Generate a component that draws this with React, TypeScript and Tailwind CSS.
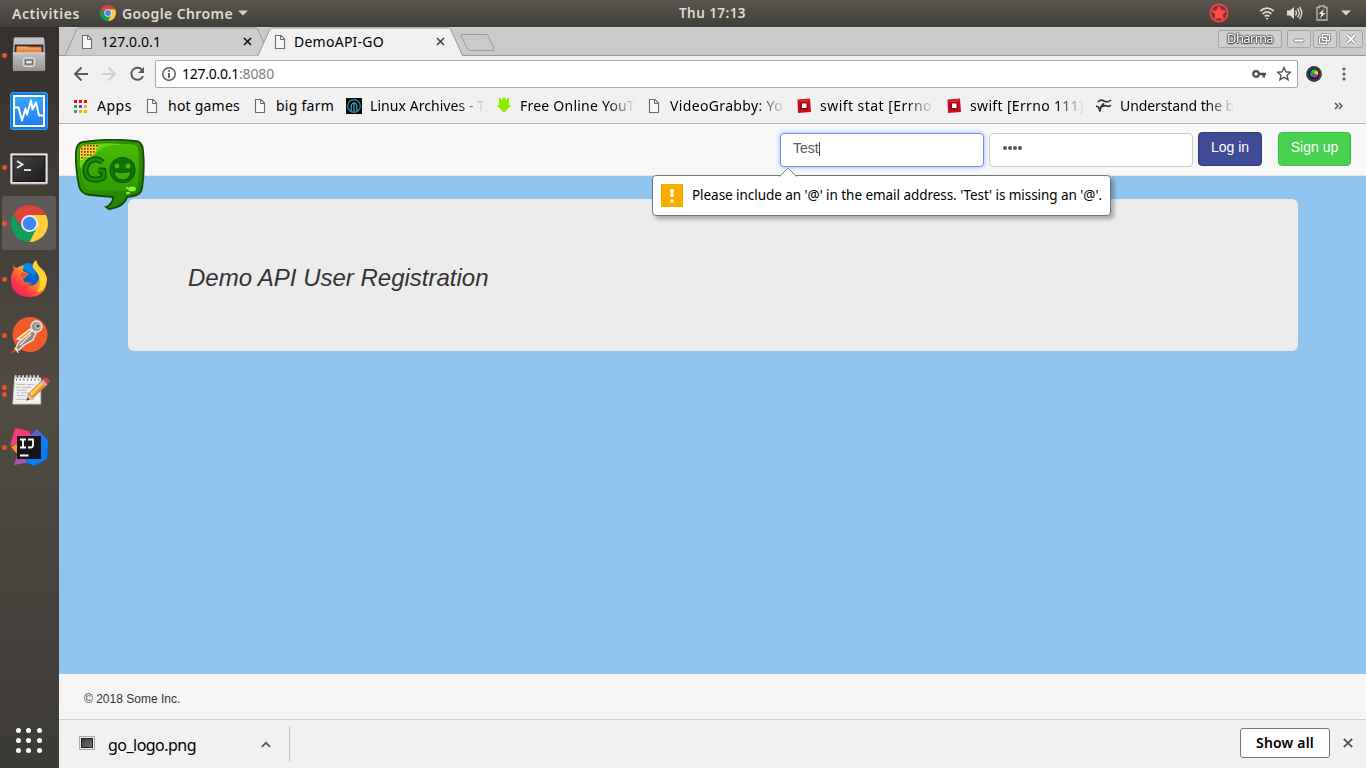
import { useLayoutEffect, useRef, useState } from 'react';
import type { ReactNode } from 'react';

const UI = "font-['Noto_Sans','Open_Sans',sans-serif]";

/* Single line label whose tracking is computed so that it fills a given width. */
function Label({ text, width, className = '' }: { text: string; width: number; className?: string }) {
  const ref = useRef<HTMLSpanElement>(null);
  const [spacing, setSpacing] = useState(0);
  useLayoutEffect(() => {
    if (ref.current) {
      setSpacing((width - ref.current.getBoundingClientRect().width) / text.length);
    }
  }, [text, width]);
  return (
    <span ref={ref} className={`${UI} inline-block shrink-0 whitespace-pre ${className}`} style={{ letterSpacing: spacing }}>
      {text}
    </span>
  );
}

function PageIcon({ className = '' }: { className?: string }) {
  return (
    <svg width="12" height="16" viewBox="0 0 12 16" className={`shrink-0 ${className}`}>
      <path d="M1.500 1.500h5.500l3.500 3.500v9.500h-9z" fill="#f8f8f8" stroke="#6c6c6c" strokeWidth="1.100" />
      <path d="M6.500 1.500v4h4" fill="none" stroke="#6c6c6c" strokeWidth="1" />
    </svg>
  );
}

function ChromeIcon({ size }: { size: number }) {
  return (
    <svg width={size} height={size} viewBox="0 0 48 48" className="shrink-0">
      <path d="M24 24H24L13.600 30L3.200 12A24 24 0 0 0 24 48L34.400 30z" fill="#109d58" />
      <path d="M24 13H45.300A24 24 0 0 1 24 48L33.500 29.500z" fill="#ffcd40" />
      <path d="M3.200 12A24 24 0 0 1 45.300 13H24L14 29z" fill="#db4437" />
      <circle cx="24" cy="24" r="11" fill="#f1f1f1" />
      <circle cx="24" cy="24" r="8.800" fill="#4285f4" />
    </svg>
  );
}

function FilesIcon() {
  return (
    <svg width="36" height="38" viewBox="0 0 38 40">
      <defs>
        <linearGradient id="cab" x1="0" y1="0" x2="0" y2="1"><stop offset="0" stopColor="#c4c4c4" /><stop offset="1" stopColor="#929292" /></linearGradient>
      </defs>
      <path d="M3 3q0-1.500 2-1.500h28q2 0 2 1.500l1 10v22q0 2-2 2H4q-2 0-2-2V13z" fill="#a0a0a0" />
      <path d="M3 3q0-1.500 2-1.500h28q2 0 2 1.500v6H3z" fill="#c3c3c3" />
      <path d="M4 9h30v8H4z" fill="#322c29" />
      <path d="M6 11h26v6H6z" fill="#c7672b" />
      <path d="M6 11h11l2 1h13v5H6z" fill="#eba45d" />
      <path d="M6 14h26v4H6z" fill="#ed8547" />
      <path d="M2 17.500h34V35q0 2-2 2H4q-2 0-2-2z" fill="url(#cab)" />
      <path d="M2 18h34" stroke="#dadada" />
      <rect x="13" y="23" width="12" height="9" rx="2" fill="#aaa" stroke="#eee" />
      <rect x="15.500" y="25.500" width="7" height="4" fill="#e7e7e7" stroke="#555" />
    </svg>
  );
}

function MonitorIcon() {
  return (
    <svg width="38" height="38" viewBox="0 0 38 38">
      <defs><linearGradient id="mon" x1="0" y1="0" x2="0" y2="1"><stop offset="0" stopColor="#38a8fa" /><stop offset="1" stopColor="#217df1" /></linearGradient></defs>
      <rect x=".5" y=".5" width="37" height="37" rx="2.500" fill="#1777e5" stroke="#25a0f5" />
      <rect x="4" y="4" width="30" height="30" fill="url(#mon)" stroke="#fff" strokeWidth="2" />
      <path d="M4 15.500h4.500l3.500 13 3.500-12 1.500 6 4-14 1.500 9 3.500-7 3 13h5" fill="none" stroke="#fff" strokeWidth="2" strokeLinejoin="round" />
    </svg>
  );
}

function TerminalIcon() {
  return (
    <svg width="38" height="32" viewBox="0 0 38 32" className="mt-[3px]">
      <defs><linearGradient id="term" x1="0" y1="0" x2="1" y2="1"><stop offset="0" stopColor="#454545" /><stop offset="1" stopColor="#1b1b1b" /></linearGradient></defs>
      <rect x=".5" y=".5" width="37" height="30.500" rx="1" fill="#e5e5e5" stroke="#a7a7a7" />
      <rect x="3" y="3" width="32" height="25.500" fill="url(#term)" stroke="#111" />
      <path d="M7 8l5.500 3.500L7 15" fill="none" stroke="#eee" strokeWidth="1.800" />
      <path d="M14 17h7" stroke="#eee" strokeWidth="1.800" />
    </svg>
  );
}

function FirefoxIcon() {
  return (
    <svg width="38" height="40" viewBox="0 0 38 40">
      <defs>
        <linearGradient id="fox" x1="1" y1="0" x2="0" y2="1"><stop offset="0" stopColor="#ffe226" /><stop offset=".4" stopColor="#ff9a1e" /><stop offset=".7" stopColor="#ff3647" /><stop offset="1" stopColor="#e31587" /></linearGradient>
      </defs>
      <circle cx="19" cy="19" r="15" fill="#0863cf" />
      <path d="M11 7q8-6 16 1l-2 9-10-6z" fill="#0787e6" />
      <path d="M3 6q1 3 4 3 3-3 8-2-3 2-2 5l6 3-6 5q1 5 7 3-1 3-5 3 7 3 12-2 4-5 1-11l6-1 3 7q0 19-18 19Q1 37 1 21q0-7 3-10-1-2-1-5z" fill="url(#fox)" />
      <path d="M23 9q-1-5 3-8 1 5 6 9 6 6 4 14-2 8-9 9 5-8 2-15-1-4-6-9z" fill="#ffd52d" />
      <path d="M12 13l7 2-6 4q-4 0-1-6zM13 23q4 4 9 1-1 4-6 4z" fill="#ea562b" />
    </svg>
  );
}

function PostmanIcon() {
  return (
    <svg width="38" height="40" viewBox="0 0 38 40" className="mt-[2px]">
      <circle cx="20" cy="18.500" r="17.500" fill="#f15a2b" />
      <path d="M0 37l7-6 3 4z" fill="#c54b2a" />
      <path d="M7 23l13-10 3 3-10 8z" fill="#ffa12a" stroke="#fff" strokeWidth="1.100" />
      <path d="M9 26l13-11 4 2-3 7-9 5-5 5-4-1z" fill="#8e8985" stroke="#f4eee9" strokeWidth="1.200" />
      <path d="M10 29l11-11M6 32l2 5" stroke="#eee" strokeWidth="1.100" />
      <circle cx="26.500" cy="10.500" r="5.500" fill="#999" stroke="#f4eee9" strokeWidth="1.300" />
      <circle cx="28" cy="10" r="2.300" fill="#555" stroke="#ddd" />
    </svg>
  );
}

function NotesIcon() {
  return (
    <svg width="39" height="32" viewBox="0 0 42 34" className="ml-[3px]">
      <path d="M4 3h28v28H2z" fill="#f0f0ef" stroke="#cbcbc9" />
      <path d="M4 3h28v4H4z" fill="#fff" />
      {[5, 9, 13, 17, 21, 25, 29].map((x) => <path key={x} d={`M${x} 0v5`} stroke="#ddd" strokeWidth="2" />)}
      {[5, 9, 13, 17, 21, 25, 29].map((x) => <path key={x} d={`M${x + 1} 4v2`} stroke="#555" />)}
      <path d="M6 10h9M17 10h8M6 13h4M12 13h10M6 16h11M6 19h3M11 19h8M6 22h10M5 26h20" stroke="#aaa" strokeWidth=".8" />
      <path d="M17 27l2-7L33 6l5 5-14 13z" fill="#ef992e" stroke="#a96820" strokeWidth=".8" />
      <path d="M20 20L34 6l2 2-14 14z" fill="#ffca68" />
      <path d="M32 7l3-3 5 5-3 3z" fill="#b7b7b7" />
      <path d="M34 4q3-3 6 0t-1 6z" fill="#df3e4d" />
      <path d="M17 27l2-6 4 4z" fill="#edcba2" /><path d="M17 27l1-3 2 2z" fill="#222" />
    </svg>
  );
}

function IntelliJIcon() {
  return (
    <svg width="38" height="38" viewBox="0 0 38 38">
      <path d="M5 0l14 3 4 8L0 18z" fill="#f83b76" />
      <path d="M1 19l9-5 8 8-9 6z" fill="#f99526" />
      <path d="M4 37l5-16 16 12z" fill="#a756a8" />
      <path d="M20 8l7-7 11 11-1 19-13 7-9-5z" fill="#087cfa" />
      <path d="M20 8l7-7 7 8-7 8z" fill="#5565ce" />
      <rect x="7" y="8" width="24" height="23" fill="#151515" />
      <path d="M10 11.500h6M13 11.500v8M10 19.500h6M18 11.500h5v5.500q0 2.500-2.500 2.500H18" fill="none" stroke="#fff" strokeWidth="1.800" />
      <path d="M10 27.500h8.500" stroke="#fff" strokeWidth="2" />
    </svg>
  );
}

function LauncherItem({ children, dots = 0, active = false }: { children: ReactNode; dots?: number; active?: boolean }) {
  return (
    <div className="flex h-14 w-full items-center">
      <div className="z-10 flex w-0 flex-col gap-[2px]">
        {Array.from({ length: dots }, (_, i) => (
          <span key={i} className="ml-[2px] block h-[5px] w-[5px] rounded-full bg-[#e95420]" />
        ))}
      </div>
      <div className={`ml-[2px] flex h-[54px] w-[54px] items-center justify-center rounded-[3px] ${active ? 'bg-[#5e5a57]' : ''}`}>{children}</div>
    </div>
  );
}

function TopBar() {
  return (
    <header className="flex h-[27px] shrink-0 items-center bg-gradient-to-b from-[#5a564e] to-[#403e39] text-[#dfdbd2]">
      <div className="flex w-[679px] items-center pb-px pl-3">
        <Label text="Activities" width={68} className="text-[14px] font-semibold" />
        <span className="ml-5 flex"><ChromeIcon size={16} /></span>
        <Label text="Google Chrome" width={111} className="ml-[6px] text-[14px] font-semibold" />
        <svg width="10" height="6" className="ml-[5px]"><path d="M0 .5h10L5 5.500z" fill="#d5d2ca" /></svg>
      </div>
      <Label text="Thu 17:13" width={67} className="text-[13.500px] font-semibold" />
      <div className="ml-auto flex items-center pr-[15px] pb-px">
        <svg width="20" height="20" viewBox="0 0 20 20" className="mr-[30px]">
          <circle cx="10" cy="10" r="8.700" fill="#753b35" stroke="#fb4543" strokeWidth="1.700" />
          <path d="M10 2l2.300 5.200 5.700.6-4.300 3.800 1.200 5.700-4.900-2.900-4.900 2.900 1.200-5.700L2 7.800l5.700-.6z" fill="#ff4b49" />
        </svg>
        <svg width="16" height="15" viewBox="0 0 16 15" fill="none" stroke="#deded8" strokeWidth="1.700" className="mr-[11px]">
          <path d="M1.200 5.200q6.800-6 13.600 0M3.500 7.800q4.500-4 9 0M5.700 10.400q2.300-2 4.600 0" />
          <path d="M6.500 12h3L8 14z" fill="#deded8" stroke="none" />
        </svg>
        <svg width="17" height="16" viewBox="0 0 17 16" fill="none" stroke="#dfdfda" strokeWidth="1.300" className="mr-[13px]">
          <path d="M1 5.500h3L8 2v12L4 10.500H1z" fill="#dfdfda" stroke="none" />
          <path d="M9.500 5.500q1.800 2.500 0 5M11.500 3.500q3.500 4.500 0 9M13.500 2q4.500 6 0 12" />
        </svg>
        <svg width="12" height="16" viewBox="0 0 12 16" className="mr-[13px]">
          <path d="M3.500 2.500V1h5v1.500h2.500v12.500H1V2.500z" fill="none" stroke="#b9b8b2" strokeWidth="1.300" />
          <path d="M8 4L2.500 9h3L4 13.500 9.500 8h-3z" fill="#ecece6" />
        </svg>
        <svg width="10" height="6"><path d="M0 .5h10L5 5.500z" fill="#d5d2ca" /></svg>
      </div>
    </header>
  );
}

function Dock() {
  return (
    <aside className="flex w-[59px] shrink-0 flex-col bg-gradient-to-b from-[#35302d] via-[#514b43] to-[#3c3a36]">
      <LauncherItem dots={1}><FilesIcon /></LauncherItem>
      <LauncherItem><MonitorIcon /></LauncherItem>
      <LauncherItem dots={1}><TerminalIcon /></LauncherItem>
      <LauncherItem dots={1} active><ChromeIcon size={37} /></LauncherItem>
      <LauncherItem dots={1}><FirefoxIcon /></LauncherItem>
      <LauncherItem dots={1}><PostmanIcon /></LauncherItem>
      <LauncherItem dots={2}><NotesIcon /></LauncherItem>
      <LauncherItem dots={1}><IntelliJIcon /></LauncherItem>
      <div className="mt-auto mb-[15px] ml-4 grid w-[26px] grid-cols-3 gap-[5px]">
        {Array.from({ length: 9 }, (_, i) => <span key={i} className="h-[5px] w-[5px] rounded-full bg-white" />)}
      </div>
    </aside>
  );
}

function TabStrip() {
  return (
    <div className="relative flex h-[29px] items-center bg-[#cacaca] text-[14px] text-black">
      <svg width="1307" height="29" className="absolute inset-0">
        <path d="M0 28.500h1307" stroke="#999" />
        <path d="M6 28.500L18 2q.5-1 1.500-1h177q1.500 0 2 1l12 26.500" fill="#cdcdcd" stroke="#999" />
        <path d="M199 29L211 2q.5-1 1.500-1h177q1.500 0 2 1l12 27z" fill="#f1f1f1" />
        <path d="M199 28.500L211 2q.5-1 1.500-1h177q1.500 0 2 1l12 26.500" fill="none" stroke="#999" />
        <path d="M403 7.500h24q1.500 0 2 1l6 13.500q.5 1.500-1 1.500h-23q-1.500 0-2-1L402 9q-.5-1.500 1-1.500z" fill="none" stroke="#9b9b9b" />
      </svg>
      <div className="relative flex w-[193px] items-center pl-[22px]">
        <PageIcon />
        <Label text="127.0.0.1" width={60} className="ml-[8px]" />
        <svg width="9" height="9" className="ml-auto"><path d="M1 1l7 7M8 1L1 8" stroke="#111" strokeWidth="1.600" /></svg>
      </div>
      <div className="relative flex w-[193px] items-center pl-[22px]">
        <PageIcon />
        <Label text="DemoAPI-GO" width={90} className="ml-[8px]" />
        <svg width="9" height="9" className="ml-auto"><path d="M1 1l7 7M8 1L1 8" stroke="#444" strokeWidth="1.600" /></svg>
      </div>
      <div className="relative mb-[6px] ml-auto flex items-center pr-[3px]">
        <div className="mr-[5px] flex h-[18px] w-[64px] items-center justify-center rounded-[2px] border border-[#a6a6a6] bg-[#cfcfcf]">
          <Label text="Dharma" width={46} className="text-[13px] text-white opacity-[0.99] [text-shadow:0_0_2px_#333,0_0_2px_#333,0_0_2px_#333,0_1px_1px_#444]" />
        </div>
        <svg width="76" height="18" viewBox="0 0 76 18" fill="#cfcfcf" stroke="#a6a6a6">
          <rect x=".5" y=".5" width="23" height="17" rx="1.500" /><rect x="26.500" y=".5" width="23" height="17" rx="1.500" /><rect x="52.500" y=".5" width="23" height="17" rx="1.500" />
          <rect x="7" y="9" width="10" height="3" rx="1" fill="#fff" stroke="#888" />
          <path d="M35.500 4.500h7v6h-7zM32.500 7.500h7v6h-7z" fill="none" stroke="#888" strokeWidth="2.600" /><path d="M35.500 4.500h7v6h-7zM32.500 7.500h7v6h-7z" fill="none" stroke="#fff" strokeWidth="1" />
          <path d="M60 5l8 8M68 5l-8 8" stroke="#888" strokeWidth="3.400" /><path d="M60 5l8 8M68 5l-8 8" stroke="#fff" strokeWidth="1.800" />
        </svg>
      </div>
    </div>
  );
}

function AddressBar() {
  return (
    <div className="flex h-9 items-center bg-[#f1f1f1]">
      <svg width="76" height="20" viewBox="0 0 76 20" fill="none" strokeWidth="2" className="ml-[14px] shrink-0">
        <path d="M15 10H2M8.500 3.500L2 10l6.500 6.500" stroke="#5a5c60" />
        <path d="M29 10h13M35.500 3.500L42 10l-6.500 6.500" stroke="#d1d1d1" />
        <path d="M69.300 6.300A6 6 0 1 0 70 12" stroke="#5a5c60" /><path d="M71 3v6h-6z" fill="#5a5c60" />
      </svg>
      <div className="ml-[6px] flex h-7 w-[1143px] items-center rounded-[2px] border border-[#a9a9a9] bg-white pr-[5px] pl-[6px]">
        <svg width="14" height="14" viewBox="0 0 14 14" fill="none" stroke="#555"><circle cx="7" cy="7" r="6.200" strokeWidth="1.400" /><path d="M7 6v5M7 3v1.800" strokeWidth="1.800" /></svg>
        <Label text="127.0.0.1" width={57} className="mb-px ml-[6px] text-[14px] text-black" />
        <Label text=":8080" width={35} className="mb-px text-[14px] text-[#808080]" />
        <svg width="14" height="10" viewBox="0 0 14 10" className="ml-auto"><circle cx="4" cy="5" r="2.800" fill="none" stroke="#505050" strokeWidth="2.200" /><path d="M7 3.800h7v2.400h-1v2.300h-2.500V6.200H7z" fill="#505050" /></svg>
        <svg width="16" height="16" viewBox="0 0 16 16" className="ml-[10px]"><path d="M8 1.500l1.900 4.300 4.600.4-3.500 3.100 1.100 4.600L8 11.400l-4.100 2.500L5 9.300 1.500 6.200l4.600-.4z" fill="none" stroke="#555" strokeWidth="1.400" /></svg>
      </div>
      <svg width="16" height="16" viewBox="0 0 16 16" className="ml-2">
        <circle cx="8" cy="8" r="7.900" fill="#3a3a45" /><circle cx="8" cy="8" r="5" fill="#101016" />
        <path d="M8 8L4.500 6Q7 2 10 4z" fill="#22ca47" /><path d="M8 8L4.500 6Q3 9 6 11z" fill="#16a0d8" /><path d="M8 8l2-4q3 2 2 5z" fill="#dced27" /><path d="M8 8l4 1q-1 4-6 2z" fill="#d321ae" />
      </svg>
      <svg width="4" height="14" className="ml-[20px]" fill="#5a5c60"><circle cx="2" cy="2" r="1.600" /><circle cx="2" cy="7" r="1.600" /><circle cx="2" cy="12" r="1.600" /></svg>
    </div>
  );
}

function Bookmark({ icon, text, width, className, fade = false }: { icon: ReactNode; text: string; width: number; className: string; fade?: boolean }) {
  return (
    <div className={`flex h-5 shrink-0 items-center ${className}`}>
      <span className="flex w-4 shrink-0 justify-center">{icon}</span>
      <span className={`ml-[8px] flex min-w-0 flex-1 ${fade ? '[mask-image:linear-gradient(to_right,#000_76%,transparent_100%)]' : ''}`}>
        <Label text={text} width={width} className="text-[14px] leading-5 text-black" />
      </span>
    </div>
  );
}

function ErrnoIcon() {
  return <svg width="16" height="16" viewBox="0 0 16 16"><path d="M1.500 1.500l12.500-1 1 13.500-13 1z" fill="#c70c22" /><path d="M2 2l12-1-2 3H4z" fill="#e6202e" /><path d="M4 4h8v8H4z" fill="#9c0715" /><rect x="6" y="5.500" width="4.500" height="4.500" fill="#fff" /></svg>;
}

function Bookmarks() {
  const apps = ['#f40d17', '#f40d17', '#f40d17', '#20ae4d', '#6b36ef', '#efb800', '#20ae4d', '#efb800', '#efb800'];
  return (
    <div className="flex h-8 items-start border-b border-[#b5b5b5] bg-[#f1f1f1] pt-1 pl-[14px]">
      <Bookmark className="w-[71px]" text="Apps" width={35} icon={
        <span className="mr-[2px] grid grid-cols-3 gap-[2px]">{apps.map((c, i) => <span key={i} className="h-[3px] w-[3px]" style={{ backgroundColor: c }} />)}</span>
      } />
      <Bookmark className="w-[108px]" text="hot games" width={72} icon={<PageIcon />} />
      <Bookmark className="w-[94px]" text="big farm" width={58} icon={<PageIcon />} />
      <Bookmark className="w-[139px]" fade text="Linux Archives - T" width={115} icon={
        <svg width="16" height="16" viewBox="0 0 16 16"><path d="M0 0h16v16H0z" fill="#05090b" /><circle cx="8" cy="8" r="6.300" fill="none" stroke="#318ca4" strokeWidth="1.200" /><path d="M8 4v10M5.200 13V8q0-2 2-3M10.800 13V8q0-2-2-3" fill="none" stroke="#49a4bd" strokeWidth="1.200" /></svg>
      } />
      <Bookmark className="ml-[11px] w-[139px]" fade text="Free Online YouT" width={115} icon={
        <svg width="16" height="16" viewBox="0 0 16 16"><path d="M3 0h2v2h1V0h4v2h1V0h2v7h2.500L8 15 .5 7H3z" fill="#8bec00" /></svg>
      } />
      <Bookmark className="ml-[11px] w-[139px]" fade text="VideoGrabby: Yo" width={113} icon={<PageIcon />} />
      <Bookmark className="ml-[11px] w-[138px]" fade text="swift stat [Errno" width={112} icon={<ErrnoIcon />} />
      <Bookmark className="ml-[12px] w-[138px]" fade text="swift [Errno 111]" width={114} icon={<ErrnoIcon />} />
      <Bookmark className="ml-[12px] w-[138px]" fade text="Understand the b" width={114} icon={
        <svg width="18" height="16" viewBox="0 0 18 16" fill="none" stroke="#333" strokeWidth="1.600" className="shrink-0"><path d="M3 4q2.500-3 6-1 4 2 7-1M7 9q2-2 5-1 2 1 4-1M1 8l2.500 1L5 13.500q0-5 4-8" /></svg>
      } />
      <svg width="9" height="8" viewBox="0 0 9 8" fill="none" stroke="#555" strokeWidth="1.500" className="mt-[6px] mr-[23px] ml-auto"><path d="M1 1l3 3-3 3M5 1l3 3-3 3" /></svg>
    </div>
  );
}

function GoLogo() {
  return (
    <svg width="70" height="71" viewBox="0 0 70 71" className="absolute top-[15px] left-4">
      <defs>
        <linearGradient id="go" x1="0" y1="0" x2="1" y2="1"><stop offset="0" stopColor="#4fae0c" /><stop offset=".4" stopColor="#2f9405" /><stop offset="1" stopColor="#1f7a01" /></linearGradient>
        <linearGradient id="face" x1="0" y1="0" x2="0" y2="1"><stop offset="0" stopColor="#4cbc09" /><stop offset="1" stopColor="#2e9a04" /></linearGradient>
        <pattern id="dots" width="3" height="3" patternUnits="userSpaceOnUse"><rect width="3" height="3" fill="#dce629" /><rect width="1.700" height="1.700" fill="#c51b20" /></pattern>
      </defs>
      <path d="M8 3Q35-1 60 2q7 0 8 9 2 19-1 38-1 7-9 8l-6 1q-3 10-18 12l-3-2q7-3 7-10l-23-2q-9-1-11-9Q0 26 1 12q1-8 7-9z" fill="url(#go)" stroke="#184c04" strokeWidth="1.800" />
      <path d="M10 5Q35 2 59 5q5 1 5 8 2 17-1 33-1 6-7 6-22 2-40 0-7-1-9-7Q3 27 5 12q0-6 5-7z" fill="url(#face)" stroke="#2b8504" strokeWidth="1" />
      <path d="M9 6q20-3 46 0-24-1-31 5-5 5-7 9-8 1-12 10Q3 17 9 6z" fill="#6ad316" />
      <path d="M8 6h15v3h-2v4l-6 5H8v3H5V10z" fill="url(#dots)" />
      <path d="M27.500 23.500q-4-4-9-3-8 2-8 11 0 8 8 9 5 1 10-2v-7h-5" fill="none" stroke="#0a5c03" strokeWidth="6" strokeLinejoin="round" />
      <path d="M27.500 23.500q-4-4-9-3-8 2-8 11 0 8 8 9 5 1 10-2v-7h-5" fill="none" stroke="#1c8a05" strokeWidth="3" strokeLinejoin="round" />
      <circle cx="47.500" cy="31" r="12.500" fill="#117305" stroke="#0a5c03" strokeWidth="1.200" />
      <circle cx="42" cy="27" r="3.200" fill="#4ab50c" stroke="#0a5c03" /><circle cx="53" cy="27" r="3.200" fill="#4ab50c" stroke="#0a5c03" />
      <path d="M39 32.500q8.500 2 17 0-1 8-8.500 8.500-7.500-.5-8.500-8.500z" fill="#44ad0c" stroke="#0a5c03" />
      <ellipse cx="57" cy="50" rx="4" ry="2.500" fill="#83f22d" /><ellipse cx="53" cy="54" rx="2" ry="1.300" fill="#83f22d" /><circle cx="52" cy="49" r="1.200" fill="#83f22d" />
    </svg>
  );
}

function ValidationBubble() {
  return (
    <div className="absolute top-[51px] left-[593px] flex h-[41px] w-[459px] items-center rounded-[4px] border border-[#777] bg-white pl-2 shadow-[3px_3px_4px_rgba(0,0,0,0.3)]">
      <svg width="18" height="10" className="absolute -top-[9px] left-[126px]"><path d="M0 10L9 1l9 9z" fill="#fff" /><path d="M0 9.500h.5L9 1l8.500 8.500h.5" fill="none" stroke="#888" /></svg>
      <svg width="22" height="23"><rect width="22" height="23" rx="1" fill="#f9ae00" /><path d="M11 5v8M11 15.500v3" stroke="#fff" strokeWidth="3.200" /></svg>
      <Label text="Please include an '@' in the email address. 'Test' is missing an '@'." width={410} className="ml-[9px] text-[13.500px] text-black" />
    </div>
  );
}

function Page() {
  return (
    <main className="relative flex flex-1 flex-col bg-[#90c5ef] font-['Liberation_Sans',Arial,sans-serif] text-[14px]">
      <nav className="flex h-[52px] shrink-0 items-start justify-end border-b border-[#e7e7e7] bg-[#f8f8f8] pt-2 pr-[15px] leading-5">
        <div className="mt-px flex h-[34px] w-[204px] items-start rounded-[4px] border border-[#6f8ff0] bg-white px-3 pt-[4px] text-[#555] shadow-[0_0_5px_rgba(90,130,245,0.55)]">
          Test<span className="mt-[4px] h-[14px] w-px bg-[#444]" />
        </div>
        <div className="mt-px ml-[5px] flex h-[34px] w-[204px] items-start gap-px rounded-[4px] border border-[#ccc] bg-white px-[13px] pt-3">
          {[0, 1, 2, 3].map((i) => <span key={i} className="h-[4px] w-[4px] rounded-full bg-[#555]" />)}
        </div>
        <button className="ml-[5px] flex h-[34px] w-16 justify-center rounded-[4px] border border-[#333c7d] bg-[#3f4b94] pt-1 text-white">Log in</button>
        <button className="ml-4 flex h-[34px] w-[73px] justify-center rounded-[4px] border border-[#38c442] bg-[#48d150] pt-1 text-white">Sign up</button>
      </nav>
      <section className="mt-[23px] mr-[68px] ml-[69px] flex h-[152px] items-center rounded-[6px] bg-[#ececec] pt-[6px] pl-[60px]">
        <h1 className="text-[24px] leading-[26px] text-[#333] italic">Demo API User Registration</h1>
      </section>
      <footer className="mt-auto flex h-[45px] items-center bg-[#f5f5f5] pt-[4px] pl-[25px] text-[12px] text-[#333]">© 2018 Some Inc.</footer>
      <GoLogo />
      <ValidationBubble />
    </main>
  );
}

function DownloadShelf() {
  return (
    <div className="flex h-[49px] shrink-0 items-center border-t border-[#d0d0d0] bg-[#f1f1f1] text-black">
      <div className="flex h-[36px] w-[231px] items-center border-r border-[#c4c4c4] pl-5">
        <svg width="16" height="14" viewBox="0 0 16 14" className="mb-[2px]"><defs><linearGradient id="thumb" x1="0" y1="0" x2="1" y2="1"><stop stopColor="#383838" /><stop offset="1" stopColor="#757575" /></linearGradient></defs><rect x=".5" y=".5" width="15" height="13" fill="#eee" stroke="#aaa" /><rect x="2.500" y="2.500" width="11" height="9" fill="url(#thumb)" stroke="#222" /></svg>
        <Label text="go_logo.png" width={88} className="mt-[2px] ml-[13px] text-[16px]" />
        <svg width="10" height="7" className="mr-[18px] ml-auto"><path d="M.8 6L5 1.800 9.200 6" fill="none" stroke="#555" strokeWidth="1.700" /></svg>
      </div>
      <button className="mr-[13px] mb-[2px] ml-auto flex h-[30px] w-[90px] items-center justify-center rounded-[3px] border border-[#777] bg-white pb-[2px]">
        <Label text="Show all" width={58} className="text-[14px] font-semibold" />
      </button>
      <svg width="10" height="10" className="mr-[13px] mb-[2px]"><path d="M.8.8l8.400 8.400M9.200.8L.8 9.200" stroke="#555" strokeWidth="1.900" /></svg>
    </div>
  );
}

export default function App() {
  return (
    <div className="flex h-[768px] w-[1366px] flex-col overflow-hidden">
      <TopBar />
      <div className="flex min-h-0 flex-1">
        <Dock />
        <div className="flex w-[1307px] flex-col">
          <TabStrip />
          <AddressBar />
          <Bookmarks />
          <Page />
          <DownloadShelf />
        </div>
      </div>
    </div>
  );
}
